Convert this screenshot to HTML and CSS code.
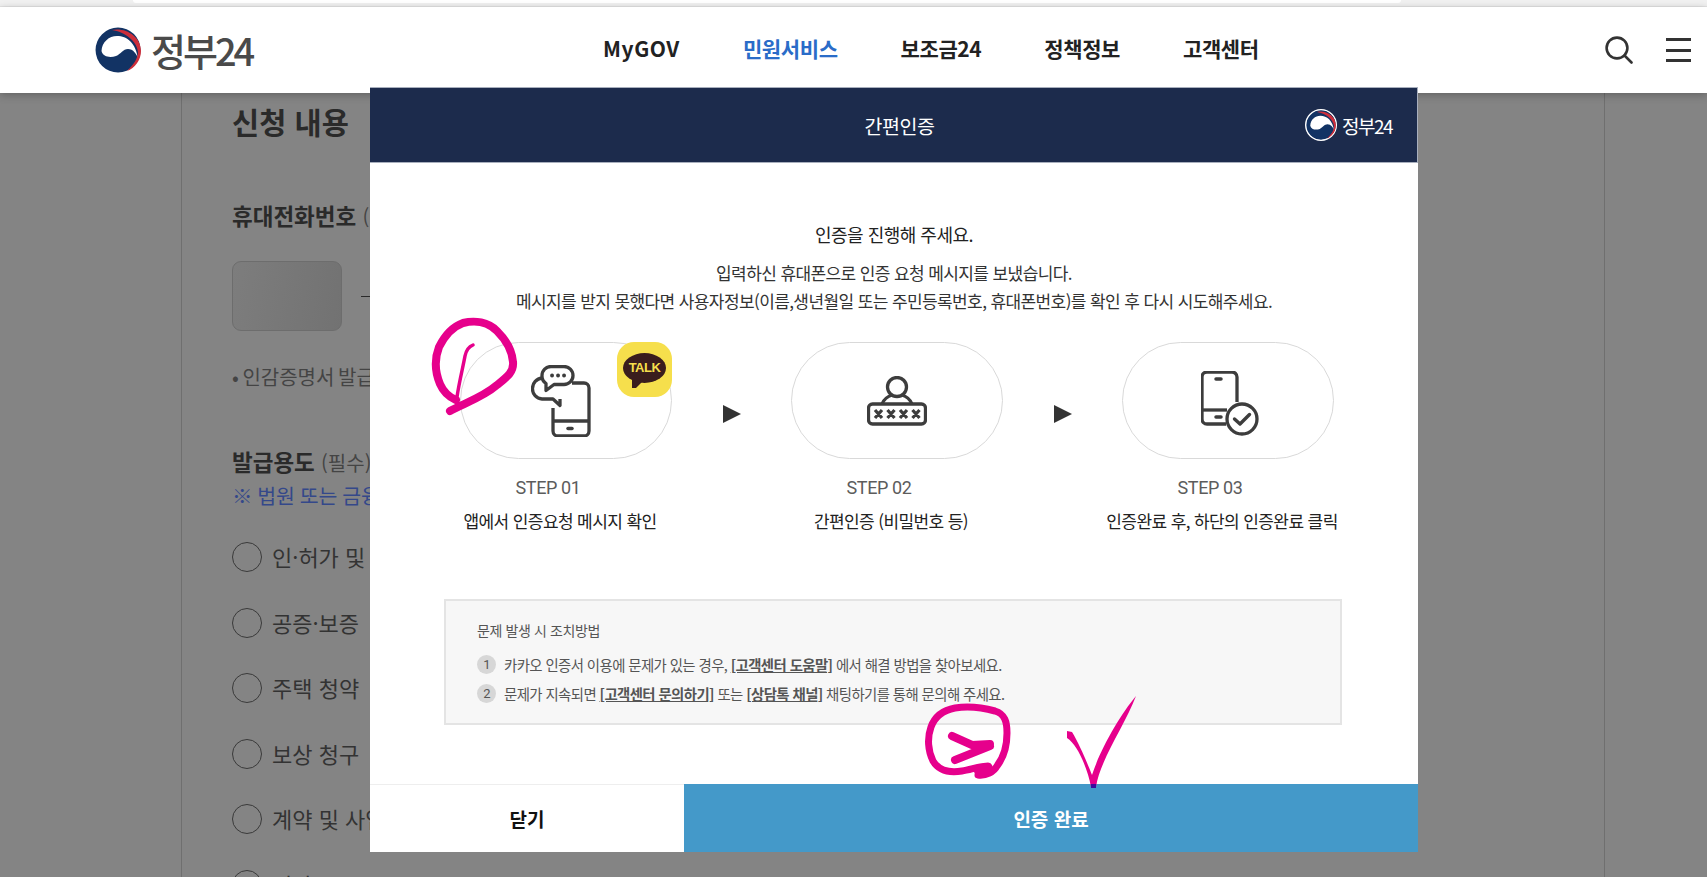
FILE: index.html
```html
<!DOCTYPE html>
<html lang="ko">
<head>
    <meta charset="UTF-8">
    <meta name="viewport" content="width=device-width, initial-scale=1.0">
    <title>정부24 간편인증</title>
    <link rel="stylesheet" href="styles.css">
</head>
<body>
    <svg class="defs" width="0" height="0">
        <symbol id="emblem" viewBox="0 0 46 46">
            <path fill="#123364" d="M23 .5a22.5 22.5 0 1 0 .1 45 22.5 22.5 0 0 0-.1-45z"/>
            <path fill="#fff" d="M6.500 24C7 15 14 9 22 9c10 0 19 7 21 23-1-5-5-10-10-10-5 0-7 5-12 7-6 2-13 1-14.500-5z"/>
            <path fill="#cd2e3a" d="M17 3c13-3 29 6 29 21 0 9-6 17-14 20 6-6 11-12 11-19C42 14 30 5 17 3z"/>
        </symbol>
    </svg>

    <div class="browser-strip"><div class="address-bar"></div></div>

    <header class="site-header">
        <a class="logo">
            <svg class="logo-mark"><use href="#emblem"/></svg>
            <span class="logo-text">정부24</span>
        </a>
        <nav class="gnb">
            <a>MyGOV</a>
            <a class="active">민원서비스</a>
            <a>보조금24</a>
            <a>정책정보</a>
            <a>고객센터</a>
        </nav>
        <div class="header-tools">
            <svg class="search-icon" viewBox="0 0 28 28" fill="none" stroke="#333" stroke-width="2.6">
                <circle cx="12" cy="12" r="10.4"/>
                <path d="M19.5 19.5l7 7" stroke-linecap="round"/>
            </svg>
            <div class="menu-icon"><i></i><i></i><i></i></div>
        </div>
    </header>

    <main class="page">
        <section class="form-panel">
            <h2>신청 내용</h2>
            <h3 class="field-title phone-title">휴대전화번호 <span>(필수)</span></h3>
            <div class="phone-row"><div class="phone-box"></div><div class="dash"></div></div>
            <p class="bullet">• 인감증명서 발급</p>
            <h3 class="field-title use-title">발급용도 <span>(필수)</span></h3>
            <p class="blue-note">※ 법원 또는 금융기관</p>
            <ul class="radio-list">
                <li><i></i>인·허가 및</li>
                <li><i></i>공증·보증</li>
                <li><i></i>주택 청약</li>
                <li><i></i>보상 청구</li>
                <li><i></i>계약 및 사업</li>
                <li><i></i>기타</li>
            </ul>
        </section>
    </main>

    <div class="modal">
        <div class="modal-head">
            <h1>간편인증</h1>
            <div class="modal-logo">
                <svg class="modal-mark"><use href="#emblem"/></svg>
                <span>정부24</span>
            </div>
        </div>

        <div class="modal-body">
            <p class="lead">인증을 진행해 주세요.</p>
            <p class="desc">입력하신 휴대폰으로 인증 요청 메시지를 보냈습니다.<br>메시지를 받지 못했다면 사용자정보(이름,생년월일 또는 주민등록번호, 휴대폰번호)를 확인 후 다시 시도해주세요.</p>

            <div class="steps">
                <div class="step">
                    <div class="pill">
                        <svg class="icon-one" viewBox="0 0 60 72" fill="none" stroke="#3d3d3d" stroke-width="3.300" stroke-linejoin="round">
                            <path d="M41 18h12a5 5 0 0 1 5 5v43a5 5 0 0 1-5 5H27a5 5 0 0 1-5-5V43"/>
                            <path d="M22 56h36"/>
                            <path d="M37 63.500h4" stroke-width="3.500" stroke-linecap="round"/>
                            <path d="M20 1.500h13a9 9 0 0 1 9 9 9 9 0 0 1-9 9H23l-8 6v-7a9 9 0 0 1-4-8 9 9 0 0 1 9-9z"/>
                            <path d="M11 13a10.500 10.500 0 0 0-9.500 10.500A10 10 0 0 0 11 34h11l7 6.500V34"/>
                            <path d="M21 10.500h.1M27 10.500h.1M33 10.500h.1" stroke-width="3.800" stroke-linecap="round"/>
                        </svg>
                        <div class="talk-badge"><span>TALK</span></div>
                    </div>
                    <strong class="step-no">STEP 01</strong>
                    <p class="step-text">앱에서 인증요청 메시지 확인</p>
                </div>
                <div class="arrow"></div>
                <div class="step">
                    <div class="pill">
                        <svg class="icon-two" viewBox="0 0 60 50" fill="none" stroke="#3d3d3d" stroke-width="3.300">
                            <circle cx="30" cy="11" r="9.500"/>
                            <path d="M15 28c2-5 7-8 10-9M45 28c-2-5-7-8-10-9"/>
                            <rect x="1.500" y="28" width="57" height="20" rx="4"/>
                            <path d="M8 34l7 8M15 34l-7 8M20.500 34l7 8M27.500 34l-7 8M33 34l7 8M40 34l-7 8M45.500 34l7 8M52.500 34l-7 8" stroke-width="3.200"/>
                        </svg>
                    </div>
                    <strong class="step-no">STEP 02</strong>
                    <p class="step-text">간편인증 (비밀번호 등)</p>
                </div>
                <div class="arrow"></div>
                <div class="step">
                    <div class="pill">
                        <svg class="icon-three" viewBox="0 0 58 65" fill="none" stroke="#3d3d3d" stroke-width="3.300">
                            <path d="M36 31V6a5 5 0 0 0-5-5H6a5 5 0 0 0-5 5v42a5 5 0 0 0 5 5h19"/>
                            <path d="M1 39h25"/>
                            <path d="M15 8h5M15 46h5" stroke-width="3.500" stroke-linecap="round"/>
                            <circle cx="41" cy="48" r="15"/>
                            <path d="M33.500 48l5.500 5 9.500-9.500" stroke-width="3.400" stroke-linecap="round" stroke-linejoin="round"/>
                        </svg>
                    </div>
                    <strong class="step-no">STEP 03</strong>
                    <p class="step-text">인증완료 후, 하단의 인증완료 클릭</p>
                </div>
            </div>

            <div class="help-box">
                <p class="help-title">문제 발생 시 조치방법</p>
                <p class="help-row"><i>1</i>카카오 인증서 이용에 문제가 있는 경우, <b>[고객센터 도움말]</b> 에서 해결 방법을 찾아보세요.</p>
                <p class="help-row"><i>2</i>문제가 지속되면 <b>[고객센터 문의하기]</b> 또는 <b>[상담톡 채널]</b> 채팅하기를 통해 문의해 주세요.</p>
            </div>
        </div>

        <div class="modal-foot">
            <button class="btn-close">닫기</button>
            <button class="btn-done">인증 완료</button>
        </div>
    </div>

    <!-- pen marks drawn over the screenshot -->
    <svg class="pen-marks" viewBox="0 0 1707 877" fill="none" stroke="#e6008c" stroke-linecap="round" stroke-linejoin="round">
        <path stroke-width="8" d="M450 411C462 404 482 398 497 385C507 377 514 372 513 362C512 349 505 339 497 331C488 322 475 320 463 323C452 327 444 337 439 347C434 360 435 372 440 384C443 391 449 397 456 400"/>
        <path stroke-width="3.500" d="M473 345C468 347 466 351 465 356C463 367 459 383 457 397"/>
        <path stroke-width="7" d="M978 775C986 776 994 772 997 766C1004 757 1007 745 1007 733C1007 722 1005 714 995 711C984 708 968 706 955 708C944 710 935 716 931 727C927 738 928 751 933 761C939 771 950 773 962 771C970 770 980 766 988 766"/>
        <path stroke-width="10" d="M979 771L988 768"/>
        <path stroke-width="8" d="M952 736L972 745L990 744M955 760L990 746"/>
        <path fill="#e6008c" stroke="none" d="M1067 731l5 1c8 13 16 33 20 43 8-25 28-60 44-79-11 29-36 64-40 91h-5c-3-17-13-42-24-49z"/>
        <path fill="#3d0a9c" stroke="none" d="M1091 784h5v4h-5z"/>
    </svg>
</body>
</html>
```

FILE: styles.css
```css
* {
    box-sizing: border-box;
}

html, body {
    height: 877px;
}

body {
    margin: 0;
    overflow: hidden;
    background-color: #848484;
    color: #222;
    font-family: "Noto Sans CJK KR", "Noto Sans", sans-serif;
}

h1, h2, h3, p, ul {
    margin: 0;
    padding: 0;
}

.defs {
    position: absolute;
}

/* top of the browser window left in the capture */
.browser-strip {
    height: 7px;
    padding-left: 133px;
    background-color: #f1f1f1;
    border-bottom: 1px solid #e4e4e4;
}

.address-bar {
    width: 1268px;
    height: 3px;
    background-color: #fff;
    border-radius: 0 0 8px 8px;
}

.site-header {
    height: 86px;
    padding: 0 16px 0 95px;
    display: flex;
    align-items: center;
    background-color: #fff;
    box-shadow: 0 2px 8px rgba(0, 0, 0, 0.25);
    position: relative;
}

.logo {
    width: 158px;
    display: flex;
    align-items: center;
    gap: 10px;
}

.logo-mark {
    width: 46px;
    height: 46px;
    flex: none;
}

.logo-text {
    font-size: 38px;
    font-weight: 500;
    line-height: 46px;
    color: #4a4a4a;
    letter-spacing: -3px;
    white-space: nowrap;
}

.gnb {
    margin-left: 350px;
    padding-bottom: 4px;
    display: flex;
    gap: 63px;
    font-size: 21px;
    font-weight: 700;
    letter-spacing: -0.4px;
    color: #222;
    white-space: nowrap;
}

.gnb a:first-child {
    letter-spacing: 0.6px;
}

.gnb .active {
    color: #2a6cc8;
}

.header-tools {
    margin-left: auto;
    display: flex;
    align-items: center;
    gap: 33px;
}

.search-icon {
    width: 28px;
    height: 28px;
}

.menu-icon {
    width: 25px;
    height: 24px;
    display: flex;
    flex-direction: column;
    justify-content: space-between;
}

.menu-icon i {
    display: block;
    height: 3px;
    background-color: #333;
}

/* dimmed page behind the modal */
.page {
    padding: 0 102px 0 181px;
}

.form-panel {
    height: 784px;
    padding: 8px 0 0 50px;
    overflow: hidden;
    border-left: 1px solid #6f6f6f;
    border-right: 1px solid #6f6f6f;
    color: #2a2a2a;
}

.form-panel h2 {
    font-size: 29.500px;
    line-height: 40px;
    font-weight: 700;
}

.field-title {
    font-size: 22.500px;
    line-height: 28px;
    font-weight: 700;
    white-space: nowrap;
}

.field-title span {
    font-size: 20px;
    font-weight: 400;
    color: #444;
}

.phone-title {
    margin-top: 60px;
}

.phone-row {
    margin-top: 30px;
    display: flex;
    align-items: center;
    gap: 19px;
}

.phone-box {
    width: 110px;
    height: 70px;
    border: 1px solid #6d6d6d;
    border-radius: 9px;
    background: linear-gradient(100deg, #7d7d7d, #727272);
}

.dash {
    width: 10px;
    height: 1px;
    background-color: #2a2a2a;
}

.bullet {
    margin-top: 31px;
    font-size: 20px;
    line-height: 30px;
    word-spacing: -2px;
    color: #444;
}

.use-title {
    margin-top: 55px;
}

.blue-note {
    margin-top: 3px;
    font-size: 20.500px;
    line-height: 30px;
    word-spacing: -1px;
    color: #34488a;
}

.radio-list {
    margin-top: 32px;
    list-style: none;
    font-size: 22px;
    color: #333;
}

.radio-list li {
    height: 65.500px;
    display: flex;
    align-items: flex-start;
    gap: 10px;
    line-height: 28px;
}

.radio-list i {
    width: 30px;
    height: 30px;
    flex: none;
    border: 1px solid #3a3a3a;
    border-radius: 50%;
}

/* modal */
.modal {
    position: absolute;
    left: 370px;
    top: 87px;
    width: 1048px;
    height: 765px;
    display: flex;
    flex-direction: column;
    background-color: #fff;
}

.modal-head {
    height: 76px;
    flex: none;
    padding-right: 25px;
    display: flex;
    align-items: center;
    justify-content: flex-end;
    position: relative;
    background-color: #1c2b4c;
    color: #fff;
    border: 1px solid #a8afbd;
    border-width: 1px 1px 1px 0;
}

.modal-head h1 {
    position: absolute;
    left: 12px;
    right: 0;
    font-size: 19.500px;
    font-weight: 400;
    text-align: center;
    letter-spacing: -0.5px;
}

.modal-logo {
    display: flex;
    align-items: center;
    gap: 5px;
}

.modal-mark {
    width: 32px;
    height: 32px;
    background-color: #fff;
    border-radius: 50%;
    padding: 1px;
}

.modal-logo span {
    font-size: 19px;
    letter-spacing: -1.5px;
}

.modal-body {
    flex: 1;
    padding-top: 58px;
    text-align: center;
}

.lead {
    font-size: 18px;
    line-height: 26px;
    letter-spacing: -0.5px;
}

.desc {
    margin-top: 12px;
    font-size: 17px;
    line-height: 28px;
    letter-spacing: -0.6px;
    color: #333;
}

.steps {
    margin-top: 27px;
    padding-left: 90px;
    display: flex;
    align-items: flex-start;
}

.step {
    width: 212px;
    flex: none;
    display: flex;
    flex-direction: column;
    align-items: center;
}

.pill {
    width: 212px;
    height: 117px;
    display: flex;
    align-items: center;
    justify-content: center;
    position: relative;
    border: 1px solid #d9d9d9;
    border-radius: 59px;
}

.icon-one {
    width: 60px;
    height: 72px;
    margin-right: 11px;
}

.icon-two {
    width: 60px;
    height: 50px;
}

.icon-three {
    width: 58px;
    height: 65px;
    margin: 6px 0 0 4px;
}

.talk-badge {
    position: absolute;
    right: -1px;
    top: -1px;
    width: 55px;
    height: 55px;
    padding-bottom: 4px;
    display: flex;
    align-items: center;
    justify-content: center;
    background-color: #f6df4c;
    border-radius: 17px;
}

.talk-badge span {
    width: 43px;
    height: 30px;
    display: block;
    position: relative;
    background-color: #3a1d1d;
    border-radius: 50%;
    color: #f6df4c;
    font-family: "Liberation Sans", sans-serif;
    font-size: 13px;
    font-weight: 700;
    line-height: 30px;
    letter-spacing: -0.5px;
}

.talk-badge span::after {
    content: "";
    position: absolute;
    left: 9px;
    bottom: -5px;
    border-left: 4px solid #3a1d1d;
    border-right: 8px solid transparent;
    border-top: 8px solid #3a1d1d;
}

.step-no {
    margin-top: 16px;
    margin-right: 36px;
    font-family: "Roboto", sans-serif;
    font-size: 18px;
    line-height: 26px;
    font-weight: 400;
    letter-spacing: -0.4px;
    color: #5c5c5c;
}

.step-text {
    margin-top: 7px;
    margin-right: 12px;
    font-size: 17px;
    line-height: 26px;
    letter-spacing: -0.6px;
    white-space: nowrap;
}

.arrow {
    width: 18px;
    margin: 63px 50.500px 0;
    flex: none;
    border-left: 18px solid #333;
    border-top: 9px solid transparent;
    border-bottom: 9px solid transparent;
}

.help-box {
    width: 898px;
    height: 126px;
    margin: 65px 0 0 74px;
    padding: 19px 0 0 31px;
    background-color: #f7f7f7;
    border: 2px solid #e4e4e4;
    text-align: left;
    color: #555;
}

.help-title {
    font-size: 14px;
    line-height: 20px;
    letter-spacing: -0.4px;
}

.help-row {
    height: 29px;
    display: flex;
    align-items: center;
    white-space: pre;
    font-size: 14.400px;
    letter-spacing: -0.58px;
}

.help-title + .help-row {
    margin-top: 10px;
}

.help-row i {
    width: 19px;
    height: 19px;
    margin-right: 8px;
    flex: none;
    background-color: #d7d7d7;
    border-radius: 50%;
    font-family: "Roboto", sans-serif;
    font-size: 13px;
    font-style: normal;
    line-height: 19px;
    text-align: center;
}

.help-row b {
    text-decoration: underline;
}

.modal-foot {
    height: 68px;
    flex: none;
    display: flex;
}

.modal-foot button {
    border: 0;
    font-family: inherit;
    font-size: 19px;
    font-weight: 700;
}

.btn-close {
    width: 314px;
    background-color: #fff;
    color: #111;
    border-top: 1px solid #eee !important;
}

.btn-done {
    flex: 1;
    background-color: #4499c9;
    color: #fff;
}

.pen-marks {
    position: absolute;
    left: 0;
    top: 0;
    width: 1707px;
    height: 877px;
    pointer-events: none;
}
```
